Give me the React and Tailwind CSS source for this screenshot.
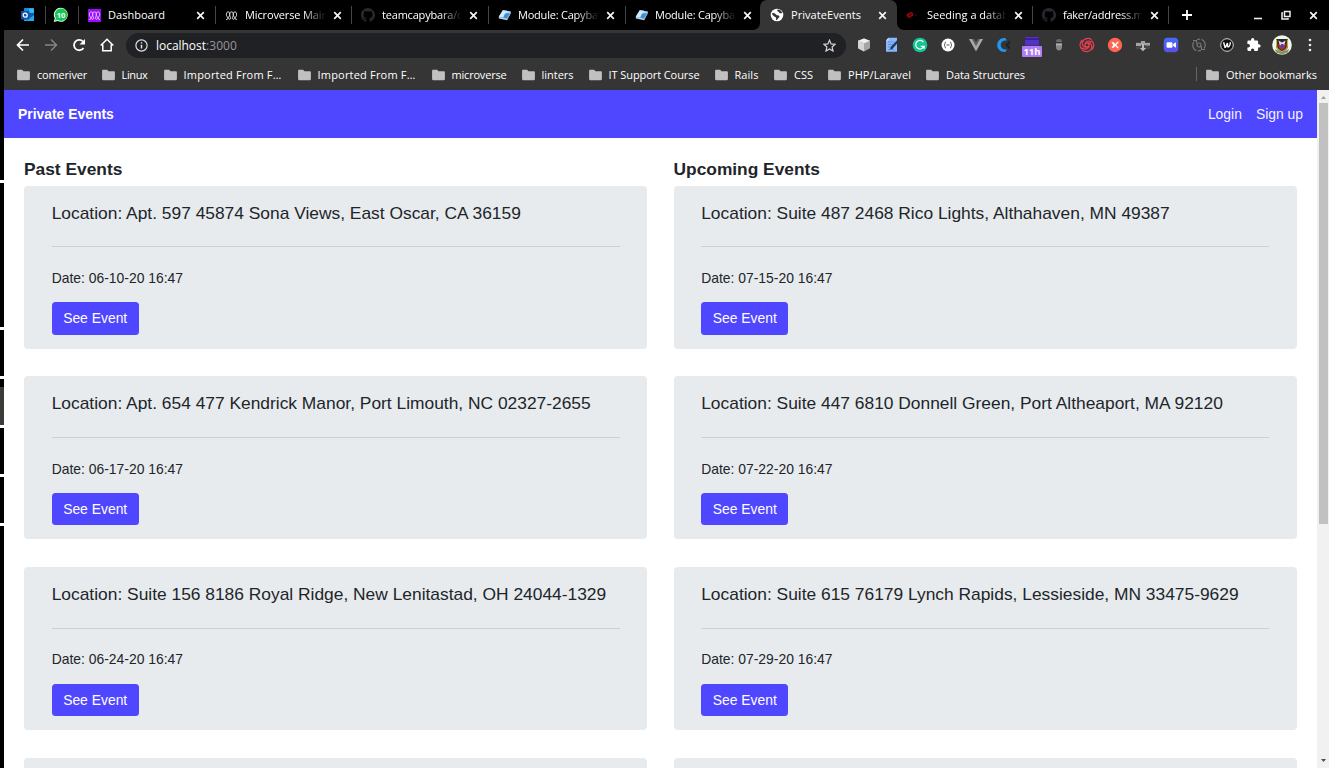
import { useLayoutEffect, useRef, useState } from 'react'

// Spreads a label over a given width with letter spacing.
function Label({ text, width, className = '' }) {
  const ref = useRef(null)
  const [gap, setGap] = useState(0)
  useLayoutEffect(() => {
    const natural = ref.current.getBoundingClientRect().width
    setGap((width - natural) / text.length)
  }, [text, width])
  return (
    <span ref={ref} className={`whitespace-pre shrink-0 ${className}`} style={{ letterSpacing: `${gap}px` }}>
      {text}
    </span>
  )
}

const Outlook = () => (
  <svg width="14" height="14" viewBox="0 0 14 14">
    <rect x="3" y="0" width="10" height="13" rx="0.5" fill="#1a86d9" />
    <rect x="8" y="0.5" width="5" height="4.5" fill="#35b8f1" />
    <rect x="4" y="0.5" width="4" height="4.5" fill="#1490df" />
    <path d="M3 13 13 6v6.5a.6.6 0 0 1-.6.6z" fill="#2aa6ec" />
    <path d="m5 7 4 3 4-3v-2H5z" fill="#0b5cad" />
    <rect x="0" y="3" width="8.5" height="8.5" rx="0.7" fill="#1553a8" />
    <circle cx="4.2" cy="7.2" r="2" fill="none" stroke="#fff" strokeWidth="1.3" />
  </svg>
)
const WhatsApp = () => (
  <svg width="16" height="16" viewBox="0 0 16 16">
    <path d="M8 .8a7 7 0 1 1-3.3 13.3L.8 15l1-3.7A7 7 0 0 1 8 .8z" fill="#fff" />
    <path d="M8 1.6a6.200 6.200 0 1 1-3.200 11.300L2 13.800l.8-2.700A6.200 6.200 0 0 1 8 1.600z" fill="#14c853" />
    <text x="8" y="10.700" fontSize="7.500" fontWeight="700" textAnchor="middle" fill="#fff" fontFamily="Open Sans, sans-serif">10</text>
  </svg>
)
const Micro = ({ box }) => (
  <svg width="13" height="13" viewBox="0 0 13 13">
    {box && <rect width="13" height="13" fill="#9a0bfb" />}
    <g fill="none" stroke={box ? '#e6c4ff' : '#e4e4e4'} strokeWidth="1">
      <path d="M1 10.300c1.200.6 2-.2 1.700-1.500C2.400 7.600 1.200 7 1.400 5.200 1.500 3.600 2.200 2.900 3.100 2.900s1.700.7 1.700 2.300C4.800 7 3.300 8 3.500 9.300c.2 1.200 1.700 1.400 2.100.2C5.900 8.300 4.600 7.200 4.600 5.200c0-1.500.8-2.300 1.900-2.300s1.900.8 1.900 2.300c0 2-1.300 3.100-1 4.300.4 1.200 1.900 1 2.100-.2.200-1.300-1.300-2.300-1.300-4.100 0-1.600.8-2.300 1.700-2.300s1.600.7 1.700 2.300c.2 1.800-1 2.400-1.300 3.600-.3 1.300.5 2.100 1.700 1.500" />
    </g>
  </svg>
)
const GitHub = () => (
  <svg width="14" height="14" viewBox="0 0 16 16" fill="#272b31">
    <path d="M8 0C3.580 0 0 3.580 0 8c0 3.540 2.290 6.530 5.470 7.590.4.070.55-.17.55-.38 0-.19-.01-.82-.01-1.490-2.010.37-2.530-.49-2.690-.94-.09-.23-.48-.94-.82-1.130-.28-.15-.68-.52-.01-.53.63-.01 1.080.58 1.230.82.72 1.210 1.870.87 2.330.66.07-.52.28-.87.51-1.070-1.780-.2-3.640-.89-3.640-3.950 0-.87.31-1.590.82-2.150-.08-.2-.36-1.020.08-2.120 0 0 .67-.21 2.200.82.64-.18 1.320-.27 2-.27s1.360.09 2 .27c1.530-1.040 2.200-.82 2.200-.82.44 1.100.16 1.920.08 2.120.51.56.82 1.270.82 2.150 0 3.070-1.870 3.750-3.650 3.950.29.25.54.73.54 1.480 0 1.070-.01 1.930-.01 2.200 0 .21.15.46.55.38A8 8 0 0 0 8 0z" />
  </svg>
)
const Diamond = () => (
  <svg width="14" height="12" viewBox="0 0 14 12">
    <path d="M4.800 1.200 13 2.400 9.200 9.500.8 7.800z" fill="#a9dcfa" />
    <path d="M4.800 1.200 9 1.800 5 8.700.8 7.800z" fill="#cdebfb" />
    <path d="M7 4.500 12 4l-2.800 5.500-4-.8z" fill="#3e8ee0" />
    <path d="m.8 7.800 8.400 1.700v1.700L.8 9.400zM9.200 9.500 13 2.400v1.500l-3.800 7.300z" fill="#b8cfe6" />
  </svg>
)
const Globe = () => (
  <svg width="14" height="14" viewBox="0 0 14 14">
    <circle cx="7" cy="7" r="6.300" fill="#fff" />
    <path d="M2 5.200c1.700-.3 3.200.300 4.200 1.500.8 1 2 .3 2.900 1 .8.700.1 1.800-.6 2.300-.9.700-.9 1.700-2.200 2.200-.6-1 .2-2.200-.6-2.900C4.600 8.500 2.500 8 2 5.200z" fill="#353535" />
    <path d="M7.700 1.500c-.8.800-.4 1.700.5 1.900 1.100.3.700 1.600 1.900 1.800.8.100 1.500-.2 2.100-.3C11.500 3 10 1.700 7.700 1.500z" fill="#353535" />
  </svg>
)
const RedMark = () => (
  <svg width="11" height="8" viewBox="0 0 11 8">
    <ellipse cx="4" cy="4" rx="3.600" ry="2.600" transform="rotate(-25 4 4)" fill="#8d080c" />
    <path d="M1 6.800 7.500 1M3 3l2.500 2.800" stroke="#260204" strokeWidth=".7" />
    <path d="M9 3.500h1.500v1.500H9z" fill="#1b1b1b" />
  </svg>
)
const Close = () => (
  <svg width="9" height="9" viewBox="0 0 9 9" className="shrink-0"><path d="m1.200 1.200 6.600 6.600m0-6.600L1.200 7.800" stroke="#f4f4f4" strokeWidth="1.700" /></svg>
)
const Folder = () => (
  <svg width="13" height="12" viewBox="0 0 13 12" className="shrink-0">
    <path d="M1.200.8h3.900l1.400 1.500h5.300c.7 0 1.100.4 1.100 1.100v6.700c0 .7-.4 1.100-1.100 1.100H1.200C.5 11.200.1 10.800.1 10.100V1.900C.1 1.200.5.800 1.200.8z" fill="#c0c0c0" />
  </svg>
)

function Tab({ w, icon, text, tw, active, sep, fade, pad = 'pl-[9px]', iw = 'w-5', lw = 'w-[81px]' }) {
  return (
    <div className={`relative flex h-[30px] shrink-0 items-center ${w} ${pad} ${active ? 'rounded-t-[7px] bg-[#353535]' : ''}`}>
      <div className={`flex shrink-0 items-center ${iw}`}>{icon}</div>
      <div className={`flex shrink-0 overflow-hidden ${lw} ${fade ? '[mask-image:linear-gradient(to_right,black_72%,transparent_100%)]' : ''}`}>
        <Label text={text} width={tw} />
      </div>
      <div className="ml-[7px] flex"><Close /></div>
      {sep && <div className="absolute right-0 top-[6px] h-[18px] w-px bg-[#454545]" />}
      {active && (
        <>
          <svg width="7" height="7" className="absolute -left-[7px] bottom-0"><path d="M7 0v7H0a7 7 0 0 0 7-7z" fill="#353535" /></svg>
          <svg width="7" height="7" className="absolute -right-[7px] bottom-0"><path d="M0 0v7h7a7 7 0 0 1-7-7z" fill="#353535" /></svg>
        </>
      )}
    </div>
  )
}

function TabStrip() {
  return (
    <div className="flex h-[30px] items-center bg-black text-white">
      <div className="relative flex h-[30px] w-[42px] items-center pl-[17px]">
        <Outlook />
        <div className="absolute right-0 top-[6px] h-[18px] w-px bg-[#454545]" />
      </div>
      <div className="relative flex h-[30px] w-[33px] items-center pl-[7px]">
        <WhatsApp />
        <div className="absolute right-0 top-[6px] h-[18px] w-px bg-[#454545]" />
      </div>
      <Tab w="w-[137px]" icon={<Micro box />} text="Dashboard" tw={57} sep />
      <Tab w="w-[136px]" icon={<Micro />} text="Microverse Main" tw={83} sep fade />
      <Tab w="w-[137px]" icon={<GitHub />} text="teamcapybara/ca" tw={86} sep fade iw="w-[21px]" lw="w-[80px]" />
      <Tab w="w-[137px]" icon={<Diamond />} text="Module: Capybara" tw={90} sep fade />
      <Tab w="w-[134px]" icon={<Diamond />} text="Module: Capybara" tw={90} fade />
      <Tab w="w-[137px]" icon={<Globe />} text="PrivateEvents" tw={70} active pad="pl-[10px]" iw="w-[21px]" lw="w-[80px]" />
      <Tab w="w-[136px]" icon={<RedMark />} text="Seeding a databa" tw={88} sep fade iw="w-[21px]" lw="w-[80px]" pad="pl-[9px]" />
      <Tab w="w-[136px]" icon={<GitHub />} text="faker/address.md" tw={87} sep fade iw="w-[21px]" lw="w-[80px]" />
      <svg width="12" height="12" className="ml-[12px]"><path d="M6 1v10M1 6h10" stroke="#fff" strokeWidth="1.800" /></svg>
      <div className="ml-auto flex items-center gap-[18px] pr-[11px]">
        <svg width="10" height="10"><path d="M1 8.500h8" stroke="#eee" strokeWidth="1.600" /></svg>
        <svg width="10" height="10" fill="none" stroke="#eee" strokeWidth="1.500"><path d="M3.500 1.500h5.500v5H3.500zM2 3H1v6h6V8" /></svg>
        <Close />
      </div>
    </div>
  )
}

const Svg = ({ children, s = 16 }) => <svg width={s} height={s} viewBox="0 0 16 16">{children}</svg>

const extensions = [
  <Svg><path d="m8 1.500 6 2.300v7.400L8 14.500l-6-3.300V3.800z" fill="#a5a5a5" /><path d="m8 1.500 6 2.300-6 2.500-6-2.500z" fill="#efefef" /><path d="M2 3.800 8 6.300v8.200l-6-3.300z" fill="#d4d4d4" /></Svg>,
  <Svg><path d="M4.500.8H13v14H2V3.500z" fill="#8bb8fa" /><path d="M2 3.500 4.500.8v2.700z" fill="#d9e8ff" /><path d="M4 5h6M4 7.500h5M4 10h3M4 12.500h6" stroke="#5c90e0" /><path d="m6 12.500.7-2.500L13 3.300l1.700 1.500L8.300 12z" fill="#233858" /></Svg>,
  <Svg><circle cx="8" cy="8" r="7.300" fill="#12c693" /><path d="M11.500 5.200A4.300 4.300 0 1 0 12 9.300H8.800M12.200 9v2.800" fill="none" stroke="#fff" strokeWidth="1.200" /></Svg>,
  <Svg><circle cx="8" cy="8" r="6.500" fill="#fff" /><path d="M6 5c-1.500 0-.6 2.200-1.800 3 1.200.8.300 3 1.800 3M10 5c1.500 0 .6 2.200 1.800 3-1.200.8-.3 3-1.800 3M6.500 8h3" fill="none" stroke="#555" strokeWidth="1" /></Svg>,
  <Svg><path d="M1 2h14L8 14.500z" fill="#aaa" /><path d="M3.800 2h8.400L8 9.500z" fill="#626262" /><path d="M6 2h4L8 5.500z" fill="#353535" /></Svg>,
  <Svg><path d="M9.300 1C4.500.4 1.200 4 1.200 8s3.300 7.500 8.100 6.900L11 12.500C7 13 4.700 11 4.700 8S7 3 11 3.500z" fill="#2196f3" /><path d="m14 3-4.700 5 4.700 5v-3.200L12 8l2-2z" fill="#1d2228" /></Svg>,
  <svg width="20" height="21" viewBox="0 0 20 21" className="mt-[5px]"><rect x="3" y="0" width="14" height="8.500" rx="1" fill="#5431c9" /><path d="M3 2h14" stroke="#20145e" /><rect y="9" width="20" height="11" rx="1" fill="#af7df7" /><text x="10" y="18" fontSize="9.500" fontWeight="700" textAnchor="middle" fill="#fff" fontFamily="Open Sans, sans-serif">11h</text></svg>,
  <Svg><path d="M5.200 4a2.800 2 0 0 1 5.600 0v1H5.200z" fill="#696969" /><path d="M5 6.500h6V10c0 2-1.200 3.500-3 3.500S5 12 5 10z" fill="#888" /><path d="M5 6.500h6v2H5z" fill="#aaa" /></Svg>,
  <Svg><g fill="none" stroke="#e93d52" strokeWidth="1.300"><path d="M8 8m-2 0a2 2 0 1 1 4 0 2 2 0 1 1-4 0M6 7.500C6 4.500 9.500 3 12.200 5.200M9 6c2.800-.5 5 3 3 6M10.200 8.800c-.5 3-4.500 4.500-7 2M7 10c-2.800.5-5-3-3-6.300M3.500 5C5 1.500 9.500.200 12.500 2.700M12.500 3.500c3 2.500 3 7 0 9.500M12.500 12c-2 3-6.500 3.500-9.200 1M3.300 12.500C.300 10 .300 6 3.200 3" /></g></Svg>,
  <Svg><circle cx="8" cy="8" r="7.200" fill="#ff6550" /><path d="M4.500 5.300h2.300L9 8l-2.200 2.700H4.500L6.300 8zM8.300 7l2-2.200H12L9.400 8l2.600 3.200h-1.700L8.300 9z" fill="#fff" /></Svg>,
  <Svg><path d="M1 5h14v7H1z" fill="#464646" /><path d="M1 6h5V4l4 0v2h5v2.500h-5V8H6v1H1z" fill="#a2a2a2" /><path d="M7 7h2v4h2.200L8 14.200 4.800 11H7z" fill="#bbb" /></Svg>,
  <Svg><defs><linearGradient id="zm" x2="0" y2="1"><stop stopColor="#456cf6" /><stop offset="1" stopColor="#5d4ee9" /></linearGradient></defs><rect x=".7" y=".7" width="14.600" height="14.600" rx="4" fill="url(#zm)" /><rect x="3.500" y="5.200" width="6" height="5.600" rx="1.200" fill="#fff" /><path d="m10.200 7 2.800-1.700v5.400L10.200 9z" fill="#fff" /></Svg>,
  <Svg><g fill="none" stroke="#777" strokeWidth="1.200"><path d="M5.500 13.700A6 6 0 0 1 3 4.500M2 3.500h3.500v3M10.500 2.300A6 6 0 0 1 13 11.500M14 12.500h-3.500v-3M6 2.500l3-.3M7 13.900l3-.2" /><circle cx="8" cy="8" r="2" /></g></Svg>,
  <Svg><circle cx="8" cy="8" r="6.300" fill="#111" stroke="#d6d6d6" /><path d="M4.600 5.200 6 10.300h.5L8.500 6v3c0 1.500 2.700 1.300 2.900-3.800" fill="none" stroke="#fff" strokeWidth="1.400" /></Svg>,
  <Svg><path d="M13 7.300h-.9V4.800c0-.7-.5-1.200-1.200-1.200H8.300v-.9a1.600 1.600 0 0 0-3.200 0v.9H2.600c-.7 0-1.200.5-1.200 1.200v2.300h.9a1.700 1.700 0 0 1 0 3.400h-.9v2.300c0 .7.500 1.200 1.200 1.200h2.300v-.9a1.700 1.700 0 0 1 3.400 0v.9h2.600c.7 0 1.200-.5 1.200-1.200v-2.300h.9a1.600 1.600 0 0 0 0-3.200z" fill="#fff" /></Svg>,
  <svg width="20" height="20" viewBox="0 0 20 20"><circle cx="10" cy="10" r="9.800" fill="#f1f6e9" /><path d="M3 14 10 17.500l7-3.500-1 3.500-6 2-6-2z" fill="#7d9a68" /><path d="M4 4h12v7c0 3-2.500 5-6 6.500C6.500 16 4 14 4 11z" fill="#29282b" /><path d="M4.600 4.500v6.300c0 2.700 2 4.400 5.400 5.900 3.400-1.500 5.400-3.200 5.400-5.900V4.500" fill="none" stroke="#d8b62c" strokeWidth="1.100" /><path d="M6 9h8l-1 4-3 2.500L7 13z" fill="#b52745" /><path d="m6.500 5.500 3.500 2 3.500-2-1 4-2.500 1.500-2.500-1.500z" fill="#dcd9ed" /><path d="M9 9h2.500v4.500H9z" fill="#4547a8" /></svg>,
  <Svg><g fill="#eee"><circle cx="8" cy="3" r="1.300" /><circle cx="8" cy="8" r="1.300" /><circle cx="8" cy="13" r="1.300" /></g></Svg>,
]

function Toolbar() {
  return (
    <div className="flex h-[30px] items-center bg-[#353535] pt-px">
      <div className="flex h-[29px] w-[122px] items-center gap-[14px] pb-px pl-3">
        <svg width="14" height="14" fill="none" stroke="#fff" strokeWidth="1.700"><path d="M13 7H2M7 1.500 1.500 7 7 12.500" /></svg>
        <svg width="14" height="14" fill="none" stroke="#858585" strokeWidth="1.500"><path d="M1 7h11M7 1.500 12.500 7 7 12.500" /></svg>
        <svg width="14" height="14" fill="none" stroke="#fff" strokeWidth="1.800"><path d="M11.500 10A5.200 5.200 0 1 1 11 3.500" /><path d="M13 1v5.500H7.500z" fill="#fff" stroke="none" /></svg>
        <svg width="14" height="14" fill="none" stroke="#fff" strokeWidth="1.500"><path d="M.7 7.500 7 1.200l6.300 6.300M2.800 6.500v6.300h8.400V6.500" /></svg>
      </div>
      <div className="flex h-[25px] w-[720px] items-center rounded-full bg-[#202124] pl-[9px] pr-[10px] text-[12px]">
        <svg width="13" height="13" className="mb-px mr-2" fill="none" stroke="#e0e0e0" strokeWidth="1.200"><circle cx="6.500" cy="6.500" r="5.600" /><path d="M6.500 5.800v3.800M6.500 3.200v1.400" strokeWidth="1.500" /></svg>
        <Label text="localhost" width={50} className="text-white" />
        <Label text=":3000" width={31} className="text-[#96979b]" />
        <svg width="13" height="13" viewBox="0 0 13 13" className="mb-px ml-auto" fill="none" stroke="#d4d4d4" strokeWidth="1.200"><path d="m6.500 1.200 1.600 3.700 4 .4-3 2.700.9 4-3.500-2.100L3 12l.9-4-3-2.700 4-.4z" /></svg>
      </div>
      <div className="flex h-[29px] items-center pb-px pl-[4.500px]">
        {extensions.map((icon, i) => (
          <div key={i} className="flex h-[28px] w-[27.870px] items-center justify-center">{icon}</div>
        ))}
      </div>
    </div>
  )
}

const bookmarks = [
  ['comeriver', 50, 'w-[84.500px]'], ['Linux', 26, 'w-[62px]'], ['Imported From F…', 98, 'w-[134px]'],
  ['Imported From F…', 98, 'w-[134px]'], ['microverse', 55, 'w-[90px]'], ['linters', 32, 'w-[67px]'],
  ['IT Support Course', 91, 'w-[126px]'], ['Rails', 24, 'w-[59.500px]'], ['CSS', 19, 'w-[54px]'],
  ['PHP/Laravel', 63, 'w-[98px]'], ['Data Structures', 79, 'w-[100px]'],
]

function BookmarkBar() {
  return (
    <div className="flex h-[30px] items-center bg-[#353535] pl-[13px] text-white">
      {bookmarks.map(([text, width, w], i) => (
        <div key={i} className={`flex shrink-0 items-center gap-[7px] ${w}`}>
          <Folder />
          <Label text={text} width={width} />
        </div>
      ))}
      <div className="ml-auto flex items-center pr-3">
        <div className="mb-[3px] mr-[9px] h-[14px] w-px bg-[#666]" />
        <Folder />
        <Label text="Other bookmarks" width={91} className="ml-[7px]" />
      </div>
    </div>
  )
}

const past = [
  ['Apt. 597 45874 Sona Views, East Oscar, CA 36159', '06-10-20 16:47'],
  ['Apt. 654 477 Kendrick Manor, Port Limouth, NC 02327-2655', '06-17-20 16:47'],
  ['Suite 156 8186 Royal Ridge, New Lenitastad, OH 24044-1329', '06-24-20 16:47'],
  null,
]
const upcoming = [
  ['Suite 487 2468 Rico Lights, Althahaven, MN 49387', '07-15-20 16:47'],
  ['Suite 447 6810 Donnell Green, Port Altheaport, MA 92120', '07-22-20 16:47'],
  ['Suite 615 76179 Lynch Rapids, Lessieside, MN 33475-9629', '07-29-20 16:47'],
  null,
]

function EventCard({ event }) {
  return (
    <div className="mb-[27.700px] h-[163px] shrink-0 rounded-[4px] bg-[#e7ebee] px-[27.700px] pt-[14px]">
      {event && (
        <>
          <p className="h-[26px] whitespace-nowrap text-[17.390px] leading-[26px]">Location: {event[0]}</p>
          <hr className="mt-[20.600px] border-[#ccd0d3]" />
          <p className="mt-[20.700px] text-[13.900px] leading-[21px]">Date: {event[1]}</p>
          <button className="mt-[13.300px] block h-[32.400px] w-[87px] rounded-[3.500px] bg-[#4f46ff] text-[13.900px] leading-[32px] text-white">See Event</button>
        </>
      )}
    </div>
  )
}

function Column({ title, events }) {
  return (
    <section className="w-[623.300px]">
      <h2 className="mb-[5.700px] text-[17.350px] font-bold leading-[21px]">{title}</h2>
      {events.map((e, i) => <EventCard key={i} event={e} />)}
    </section>
  )
}

function Page() {
  return (
    <div className="flex h-[678px] overflow-hidden bg-white font-['Liberation_Sans',Arial,sans-serif] text-[13.900px] text-[#212529]">
      <main className="w-[1313px]">
        <nav className="flex h-12 items-center bg-[#4f46ff] px-[14px] text-white">
          <a className="font-bold">Private Events</a>
          <div className="ml-auto flex gap-[14px] text-white/95"><a>Login</a><a>Sign up</a></div>
        </nav>
        <div className="flex justify-between pl-5 pr-[20.200px] pt-[21px]">
          <Column title="Past Events" events={past} />
          <Column title="Upcoming Events" events={upcoming} />
        </div>
      </main>
      <div className="flex w-3 flex-col items-center bg-[#f1f1f1]">
        <svg width="12" height="13"><path d="M4 9h5L6.500 6z" fill="#a0a0a0" /></svg>
        <div className="ml-px h-[421px] w-[9px] bg-[#c1c1c1]" />
        <svg width="12" height="13" className="mt-auto"><path d="M4 4h5L6.500 7z" fill="#505050" /></svg>
      </div>
    </div>
  )
}

const blocks = ['h-[180px] bg-black', 'h-[144px] bg-black', 'h-[46px] bg-black', 'h-[46px] bg-[#3c3b37] border-t-8 border-black', 'h-[46px] bg-black', 'h-[46px] bg-black', 'h-[242px] bg-black']

export default function App() {
  return (
    <div className="flex h-[768px] w-[1329px] overflow-hidden bg-white font-['Open_Sans','Noto_Sans',sans-serif] text-[11px]">
      <aside className="flex w-1 shrink-0 flex-col gap-[3px]">
        {blocks.map((b, i) => <div key={i} className={`shrink-0 ${b}`} />)}
      </aside>
      <div className="w-[1325px]">
        <TabStrip />
        <Toolbar />
        <BookmarkBar />
        <Page />
      </div>
    </div>
  )
}
